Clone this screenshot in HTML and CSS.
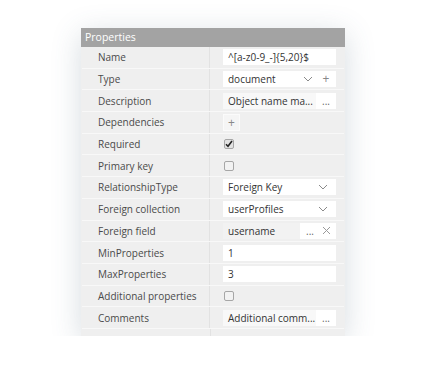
FILE: index.html
```html
<!DOCTYPE html>
<html lang="en">
<head>
  <meta charset="UTF-8" />
  <title>Properties</title>
  <link rel="stylesheet" href="styles.css">
</head>
<body>

<div class="panel">
  <div class="panel-header">Properties</div>
  <div class="props">
    <div class="row">
      <div class="label">Name</div>
      <div class="value"><div class="input">^[a-z0-9_-]{5,20}$</div></div>
    </div>
    <div class="row">
      <div class="label">Type</div>
      <div class="value">
        <div class="input select">
          <span class="text">document</span>
          <svg class="chev" width="10" height="6" viewBox="0 0 10 6"><path d="M1 1l4 4 4-4" fill="none" stroke="#8a8a8a" stroke-width="1"/></svg>
          <span class="plus">+</span>
        </div>
      </div>
    </div>
    <div class="row">
      <div class="label">Description</div>
      <div class="value">
        <div class="input split">
          <span class="text shaded">Object name ma...</span>
          <span class="dots">...</span>
        </div>
      </div>
    </div>
    <div class="row">
      <div class="label">Dependencies</div>
      <div class="value"><div class="add-btn">+</div></div>
    </div>
    <div class="row">
      <div class="label">Required</div>
      <div class="value">
        <span class="check checked">
          <svg width="8" height="8" viewBox="0 0 8 8"><path d="M1 4.2l2 2L7 1" fill="none" stroke="#222" stroke-width="1.6"/></svg>
        </span>
      </div>
    </div>
    <div class="row">
      <div class="label">Primary key</div>
      <div class="value"><span class="check"></span></div>
    </div>
    <div class="row">
      <div class="label">RelationshipType</div>
      <div class="value">
        <div class="input select">
          <span class="text">Foreign Key</span>
          <svg class="chev" width="10" height="6" viewBox="0 0 10 6"><path d="M1 1l4 4 4-4" fill="none" stroke="#8a8a8a" stroke-width="1"/></svg>
        </div>
      </div>
    </div>
    <div class="row">
      <div class="label">Foreign collection</div>
      <div class="value">
        <div class="input select">
          <span class="text">userProfiles</span>
          <svg class="chev" width="10" height="6" viewBox="0 0 10 6"><path d="M1 1l4 4 4-4" fill="none" stroke="#8a8a8a" stroke-width="1"/></svg>
        </div>
      </div>
    </div>
    <div class="row">
      <div class="label">Foreign field</div>
      <div class="value">
        <div class="input split">
          <span class="text grey">username</span>
          <span class="dots">...</span>
          <svg class="clear" width="9" height="9" viewBox="0 0 9 9"><path d="M1 1l7 7M8 1L1 8" fill="none" stroke="#9a9a9a" stroke-width="1"/></svg>
        </div>
      </div>
    </div>
    <div class="row">
      <div class="label">MinProperties</div>
      <div class="value"><div class="input">1</div></div>
    </div>
    <div class="row">
      <div class="label">MaxProperties</div>
      <div class="value"><div class="input">3</div></div>
    </div>
    <div class="row">
      <div class="label">Additional properties</div>
      <div class="value"><span class="check"></span></div>
    </div>
    <div class="row">
      <div class="label">Comments</div>
      <div class="value">
        <div class="input split">
          <span class="text shaded">Additional comm...</span>
          <span class="dots">...</span>
        </div>
      </div>
    </div>
    <div class="row filler"></div>
  </div>
</div>

</body>
</html>
```

FILE: styles.css
```css
body {
  margin: 0;
  background: #fff;
  font-family: "Open Sans", sans-serif;
  font-size: 10px;
  color: #333;
}

.panel {
  width: 264px;
  margin: 28px 0 0 81px;
  background: #efefef;
  box-shadow: 0 6px 28px rgba(70, 95, 120, 0.22);
}

.panel-header {
  height: 19px;
  line-height: 19px;
  padding-left: 4px;
  background: #a3a3a3;
  color: #fff;
  font-size: 10.5px;
}

.props {
  padding: 0 1px;
}

.row {
  display: flex;
  height: 21.7px;
  border-bottom: 1px solid #f8f8f8;
  box-sizing: border-box;
}

.row.filler {
  height: 7px;
  border-bottom: none;
}

.label {
  width: 128px;
  flex: none;
  box-sizing: border-box;
  padding-left: 16px;
  display: flex;
  align-items: center;
  border-right: 1px solid #e2e2e2;
  color: #4a4a4a;
}

.row.filler::before {
  content: "";
  width: 128px;
  border-right: 1px solid #e2e2e2;
}

.value {
  flex: 1;
  display: flex;
  align-items: center;
  padding-left: 13px;
}

.input {
  width: 113px;
  height: 16px;
  line-height: 16px;
  background: #fff;
  box-sizing: border-box;
  padding-left: 5px;
  display: flex;
  align-items: center;
  white-space: nowrap;
  overflow: hidden;
  color: #333;
}

.select .text {
  flex: 1;
}

.select .chev {
  margin-right: 8px;
}

.select .plus {
  width: 10px;
  margin-right: 5px;
  color: #888;
  font-size: 12px;
  text-align: center;
}

.input.split {
  padding-left: 0;
}

.split .text {
  width: 93px;
  height: 16px;
  flex: none;
  padding-left: 5px;
  box-sizing: border-box;
}

.split .text.shaded {
  background: #f8f8f8;
}

.split .text.grey {
  width: 77px;
  background: #f2f2f2;
}

.dots {
  padding-left: 6px;
  color: #666;
  font-size: 10px;
}

.clear {
  margin-left: 8px;
}

.add-btn {
  width: 17px;
  height: 17px;
  line-height: 16px;
  box-sizing: border-box;
  text-align: center;
  background: #f5f5f5;
  border: 1px solid #fbfbfb;
  color: #888;
  font-size: 12px;
}

.check {
  width: 8px;
  height: 8px;
  margin-left: 1px;
  border: 1px solid #a6a6a6;
  border-radius: 2px;
  background: #f2f2f2;
  display: flex;
  align-items: center;
  justify-content: center;
}

.check.checked {
  background: #e2e2e2;
}
```
